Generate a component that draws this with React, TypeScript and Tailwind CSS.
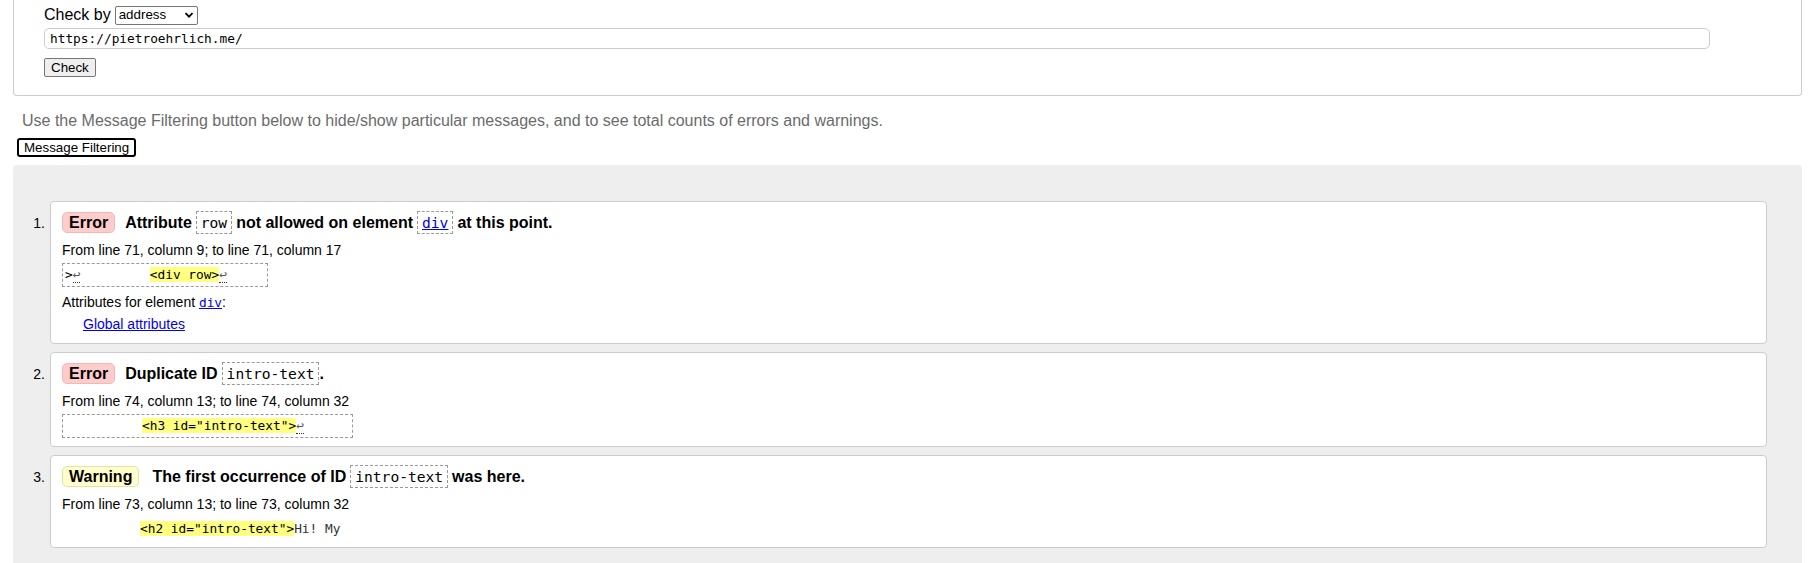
import { type ReactNode } from "react";

const MONO = "font-['DejaVu_Sans_Mono',monospace]";

function Code({ children }: { children: ReactNode }) {
  return (
    <code
      className={`${MONO} text-[14.6px] font-normal border border-dashed border-[#999] px-[4px] py-[2px] mx-[4px]`}
    >
      {children}
    </code>
  );
}

function Ret() {
  return <span className="text-[#555] border-b border-dotted border-[#333]">↩</span>;
}

function Mark({ children }: { children: ReactNode }) {
  return <mark className="bg-[#ffff80] text-black">{children}</mark>;
}

interface MessageProps {
  n: number;
  kind: "Error" | "Warning";
  title: ReactNode;
  location: string;
  extract: ReactNode;
  boxed?: boolean;
  extra?: ReactNode;
}

function Message({ n, kind, title, location, extract, boxed = true, extra }: MessageProps) {
  const badge =
    kind === "Error"
      ? "bg-[#ffcccc] border-[#f0b8b8]"
      : "bg-[#ffffcc] border-[#e3e3a8]";
  return (
    <li className="flex">
      <span className="w-[37px] shrink-0 text-right pr-[5px] pt-[12px] text-[14px] leading-[21px]">
        {n}.
      </span>
      <div
        className={`flex-1 bg-white border border-[#ccc] rounded-[4px] pl-[11px] pt-[8px] ${
          boxed ? "pb-[8px]" : "pb-[6px]"
        }`}
      >
        <p className="flex items-center text-[16px] font-bold leading-[26px]">
          <span className={`${badge} border rounded-[5px] px-[6px] leading-[19px]`}>{kind}</span>
          <span className={kind === "Error" ? "ml-[10px]" : "ml-[13px]"}>{title}</span>
        </p>
        <p className="mt-[5px] text-[14px] leading-[18px]">{location}</p>
        <div
          className={`${MONO} mt-[4px] text-[12.8px] leading-[20px] whitespace-pre inline-block py-[1px] ${
            boxed ? "border border-dashed border-[#999] px-[2px]" : "border border-transparent"
          }`}
        >
          {extract}
        </div>
        {extra}
      </div>
    </li>
  );
}

export default function App() {
  return (
    <div className="min-h-screen bg-white text-black font-['Liberation_Sans',Arial,sans-serif]">
      <div className="ml-[13px] mr-[7px] h-[96px] border border-t-0 border-[#ccc] rounded-b-[4px] pl-[30px] pt-[5px]">
        <div className="flex items-center text-[16px] leading-[20px]">
          <span>Check by</span>
          <div className="ml-[4px] w-[83px] h-[19px] border border-[#767676] rounded-[2px] flex items-center justify-between px-[3px] text-[13.33px]">
            <span>address</span>
            <svg width="10" height="10" viewBox="0 0 10 10">
              <path d="M1.5 3.2 L5 6.7 L8.5 3.2" fill="none" stroke="#000" strokeWidth="1.8" />
            </svg>
          </div>
        </div>
        <div
          className={`${MONO} mt-[3px] mr-[91px] h-[21px] border border-[#ccc] rounded-[5px] px-[5px] text-[12.8px] leading-[19px]`}
        >
          https://pietroehrlich.me/
        </div>
        <button className="mt-[9px] h-[19px] px-[6px] bg-[#efefef] border border-[#767676] rounded-[2px] text-[13.33px] leading-[16px]">
          Check
        </button>
      </div>

      <p className="ml-[22px] mt-[15px] text-[16px] leading-[19px] text-[#6b6b6b]">
        Use the Message Filtering button below to hide/show particular messages, and to see total counts of errors and warnings.
      </p>
      <button className="ml-[17px] mt-[8px] h-[19px] px-[5px] border-2 border-black rounded-[3px] text-[13.33px] leading-[14px]">
        Message Filtering
      </button>

      <div className="ml-[13px] mr-[7px] mt-[6px] bg-[#eeeeee] rounded-t-[4px] pr-[35px] pt-[36px] pb-[20px]">
        <ol className="flex flex-col gap-[8px]">
          <Message
            n={1}
            kind="Error"
            title={
              <>
                Attribute<Code>row</Code>not allowed on element
                <Code>
                  <a className="text-[#0000ee] underline">div</a>
                </Code>
                at this point.
              </>
            }
            location="From line 71, column 9; to line 71, column 17"
            extract={
              <>
                {">"}
                <Ret />
                {"         "}
                <Mark>{"<div row>"}</Mark>
                <Ret />
                {"     "}
              </>
            }
            extra={
              <>
                <p className="mt-[4px] text-[14px] leading-[22px]">
                  Attributes for element{" "}
                  <a className={`${MONO} text-[12.8px] text-[#0000ee] underline`}>div</a>:
                </p>
                <p className="pl-[21px] text-[14px] leading-[21px]">
                  <a className="text-[#0000ee] underline">Global attributes</a>
                </p>
              </>
            }
          />
          <Message
            n={2}
            kind="Error"
            title={
              <>
                Duplicate ID<Code>intro-text</Code>
                <span className="-ml-[4px]">.</span>
              </>
            }
            location="From line 74, column 13; to line 74, column 32"
            extract={
              <>
                {"          "}
                <Mark>{'<h3 id="intro-text">'}</Mark>
                <Ret />
                {"      "}
              </>
            }
          />
          <Message
            n={3}
            kind="Warning"
            title={
              <>
                The first occurrence of ID<Code>intro-text</Code>was here.
              </>
            }
            location="From line 73, column 13; to line 73, column 32"
            boxed={false}
            extract={
              <>
                {"          "}
                <Mark>{'<h2 id="intro-text">'}</Mark>
                <span className="text-[#333]">Hi! My</span>
              </>
            }
          />
        </ol>
      </div>
    </div>
  );
}
